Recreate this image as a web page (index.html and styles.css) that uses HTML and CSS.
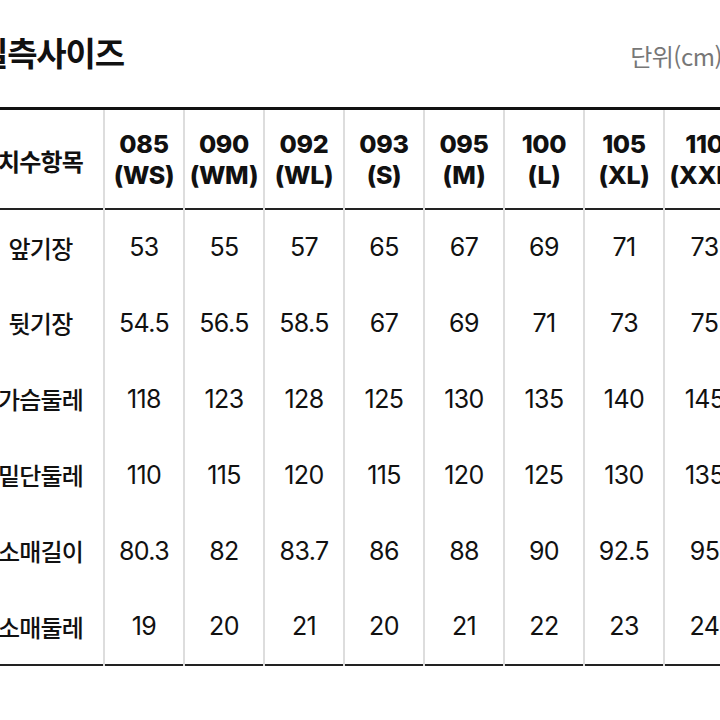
FILE: index.html
```html
<!DOCTYPE html>
<html lang="ko">
<head>
<meta charset="utf-8">
<link rel="stylesheet" href="styles.css">
</head>
<body>
<div class="sheet">
  <div class="head">
    <h1 class="title">실측사이즈</h1>
    <span class="unit">단위(cm)</span>
  </div>
  <table class="chart">
    <colgroup>
      <col class="c-label">
      <col class="c-size"><col class="c-size"><col class="c-size"><col class="c-size">
      <col class="c-size"><col class="c-size"><col class="c-size"><col class="c-size">
    </colgroup>
    <thead>
      <tr>
        <th class="label">치수항목</th>
        <th>085<br>(WS)</th>
        <th>090<br>(WM)</th>
        <th>092<br>(WL)</th>
        <th>093<br>(S)</th>
        <th>095<br>(M)</th>
        <th>100<br>(L)</th>
        <th>105<br>(XL)</th>
        <th>110<br>(XXL)</th>
      </tr>
    </thead>
    <tbody>
      <tr><td class="label">앞기장</td><td>53</td><td>55</td><td>57</td><td>65</td><td>67</td><td>69</td><td>71</td><td>73</td></tr>
      <tr><td class="label">뒷기장</td><td>54.5</td><td>56.5</td><td>58.5</td><td>67</td><td>69</td><td>71</td><td>73</td><td>75</td></tr>
      <tr><td class="label">가슴둘레</td><td>118</td><td>123</td><td>128</td><td>125</td><td>130</td><td>135</td><td>140</td><td>145</td></tr>
      <tr><td class="label">밑단둘레</td><td>110</td><td>115</td><td>120</td><td>115</td><td>120</td><td>125</td><td>130</td><td>135</td></tr>
      <tr><td class="label">소매길이</td><td>80.3</td><td>82</td><td>83.7</td><td>86</td><td>88</td><td>90</td><td>92.5</td><td>95</td></tr>
      <tr><td class="label">소매둘레</td><td>19</td><td>20</td><td>21</td><td>20</td><td>21</td><td>22</td><td>23</td><td>24</td></tr>
    </tbody>
  </table>
</div>
</body>
</html>
```

FILE: styles.css
```css
html, body {
  margin: 0;
  padding: 0;
  background: #fff;
  overflow: hidden;
}
body {
  width: 720px;
  height: 720px;
  font-family: "Inter", "Noto Sans CJK KR", sans-serif;
  color: #111;
}
.sheet {
  margin-left: -22px;
  width: 766px;
}
.head {
  display: flex;
  justify-content: space-between;
  align-items: baseline;
  height: 107px;
  box-sizing: border-box;
  padding-top: 30px;
}
.title {
  margin: 0;
  font-family: "Noto Sans CJK KR", sans-serif;
  font-size: 33px;
  font-weight: 700;
  line-height: 44px;
  letter-spacing: -1.2px;
}
.unit {
  font-family: "Noto Sans CJK KR", sans-serif;
  font-size: 24px;
  color: #777;
  padding-right: 22px;
  letter-spacing: -0.5px;
}
.chart {
  border-collapse: collapse;
  table-layout: fixed;
  width: 766px;
  border-top: 3px solid #111;
  border-bottom: 2px solid #222;
}
.c-label { width: 126px; }
.c-size { width: 80px; }
.chart th, .chart td {
  padding: 0;
  text-align: center;
  vertical-align: middle;
  border-left: 2px solid #ddd;
  white-space: nowrap;
}
.chart th.label, .chart td.label {
  border-left: none;
}
.chart thead tr {
  height: 100px;
  border-bottom: 2px solid #222;
}
.chart th {
  padding-top: 3px;
  font-size: 25px;
  font-weight: 800;
  line-height: 31px;
  letter-spacing: -0.3px;
}
.chart th.label {
  font-family: "Noto Sans CJK KR", sans-serif;
  font-size: 24px;
  font-weight: 700;
  letter-spacing: -0.8px;
}
.chart tbody tr {
  height: 76px;
}
.chart td {
  font-size: 25px;
  font-weight: 400;
  letter-spacing: -0.6px;
}
.chart td.label {
  font-family: "Noto Sans CJK KR", sans-serif;
  font-size: 24px;
  font-weight: 500;
  letter-spacing: -0.8px;
}
```
